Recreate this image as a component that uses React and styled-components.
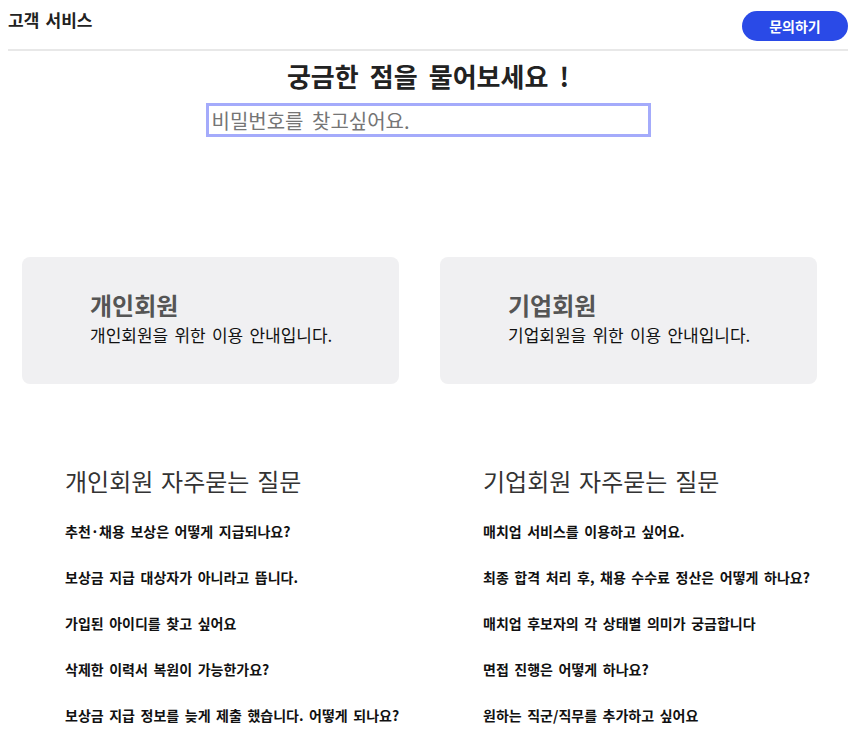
import React from 'react';
import styled, { createGlobalStyle } from 'styled-components';

const GlobalStyle = createGlobalStyle`
body {
    margin: 8px;
    background: #fff;
    font-family: "Noto Sans CJK KR", "Noto Sans", sans-serif;
    word-spacing: 0.15em;
    color: #111;
}
`;

const personalFaq = [
    '추천·채용 보상은 어떻게 지급되나요?',
    '보상금 지급 대상자가 아니라고 뜹니다.',
    '가입된 아이디를 찾고 싶어요',
    '삭제한 이력서 복원이 가능한가요?',
    '보상금 지급 정보를 늦게 제출 했습니다. 어떻게 되나요?',
];

const companyFaq = [
    '매치업 서비스를 이용하고 싶어요.',
    '최종 합격 처리 후, 채용 수수료 정산은 어떻게 하나요?',
    '매치업 후보자의 각 상태별 의미가 궁금합니다',
    '면접 진행은 어떻게 하나요?',
    '원하는 직군/직무를 추가하고 싶어요',
];

export default function App() {
    return (
        <Page>
            <GlobalStyle />
            <Header>
                <HeaderTitle>고객 서비스</HeaderTitle>
                <AskButton>문의하기</AskButton>
            </Header>

            <SearchArea>
                <SearchTitle>궁금한 점을 물어보세요 !</SearchTitle>
                <SearchInput placeholder="비밀번호를 찾고싶어요." />
            </SearchArea>

            <CardGrid>
                <MemberCard>
                    <CardTitle>개인회원</CardTitle>
                    <CardText>개인회원을 위한 이용 안내입니다.</CardText>
                </MemberCard>
                <MemberCard>
                    <CardTitle>기업회원</CardTitle>
                    <CardText>기업회원을 위한 이용 안내입니다.</CardText>
                </MemberCard>
            </CardGrid>

            <FaqGrid>
                <FaqColumn>
                    <FaqHeading>개인회원 자주묻는 질문</FaqHeading>
                    <FaqList>
                        {personalFaq.map((q) => <FaqItem key={q}>{q}</FaqItem>)}
                    </FaqList>
                </FaqColumn>
                <FaqColumn>
                    <FaqHeading>기업회원 자주묻는 질문</FaqHeading>
                    <FaqList>
                        {companyFaq.map((q) => <FaqItem key={q}>{q}</FaqItem>)}
                    </FaqList>
                </FaqColumn>
            </FaqGrid>
        </Page>
    );
}

const Page = styled.div`
width: 840px;
`;

const Header = styled.header`
display: flex;
justify-content: space-between;
align-items: flex-start;
height: 41px;
border-bottom: 2px solid #e8e8e8;
`;

const HeaderTitle = styled.h1`
margin: 0;
font-size: 17px;
line-height: 24px;
font-weight: 700;
color: #222;
`;

const AskButton = styled.button`
margin-top: 3px;
width: 106px;
height: 30px;
border: none;
border-radius: 15px;
background: #2a4ae7;
color: #fff;
font-family: inherit;
font-size: 14px;
font-weight: 700;
cursor: pointer;
`;

const SearchArea = styled.section`
display: flex;
flex-direction: column;
align-items: center;
padding-top: 7px;
`;

const SearchTitle = styled.h2`
margin: 0;
font-size: 26px;
line-height: 36px;
font-weight: 700;
word-spacing: 0.2em;
color: #222;
`;

const SearchInput = styled.input`
box-sizing: border-box;
margin-top: 9px;
width: 445px;
height: 34px;
padding: 0 3px;
border: 3px solid #a4abfb;
outline: none;
font-family: inherit;
font-size: 20px;
word-spacing: 0.2em;
color: #333;
::placeholder {
    color: #7a7a7a;
}
`;

const CardGrid = styled.section`
display: grid;
grid-template-columns: 377px 377px;
gap: 41px;
margin: 120px 0 0 14px;
`;

const MemberCard = styled.div`
height: 127px;
box-sizing: border-box;
padding: 32px 0 0 68px;
border-radius: 8px;
background: #f0f0f2;
`;

const CardTitle = styled.h3`
margin: 0;
font-size: 24px;
line-height: 32px;
font-weight: 700;
color: #555;
`;

const CardText = styled.p`
margin: 2px 0 0;
font-size: 17px;
line-height: 24px;
color: #111;
`;

const FaqGrid = styled.section`
display: grid;
grid-template-columns: 377px 377px;
gap: 41px;
margin: 80px 0 0 14px;
`;

const FaqColumn = styled.div`
padding-left: 43px;
`;

const FaqHeading = styled.h3`
margin: 0;
font-size: 24px;
line-height: 34px;
font-weight: 400;
color: #333;
`;

const FaqList = styled.ul`
list-style: none;
margin: 23px 0 0;
padding: 0;
display: flex;
flex-direction: column;
gap: 26px;
`;

const FaqItem = styled.li`
font-size: 14px;
line-height: 20px;
font-weight: 700;
color: #111;
white-space: nowrap;
`;
